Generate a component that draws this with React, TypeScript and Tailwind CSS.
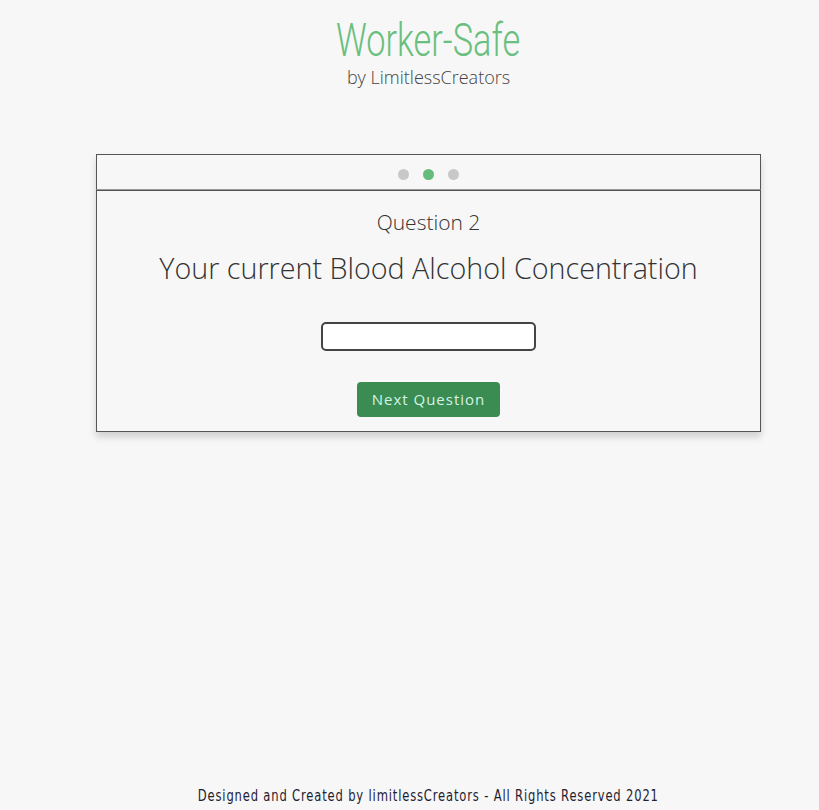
import React from "react";

export default function App() {
  return (
    <div className="min-h-[810px] bg-[#f7f7f7] flex flex-col items-center pl-[38px]">
      <header className="flex flex-col items-center pt-[14px]">
        <h1
          className="text-[#6abf7f] text-[47px] leading-[52px] scale-x-[0.73] whitespace-nowrap"
          style={{ fontFamily: 'Roboto, sans-serif', fontWeight: 300 }}
        >
          Worker-Safe
        </h1>
        <p className="text-[#444] text-[18px] leading-[22px] font-light" style={{ fontFamily: '"Open Sans", sans-serif' }}>
          by LimitlessCreators
        </p>
      </header>

      <main className="w-[665px] mt-[66px] shadow-[0_5px_7px_rgba(0,0,0,0.16)]">
        <div className="h-[36px] border border-[#555] border-b-[#999] flex items-center justify-center gap-[14px] pt-[4px]">
          <span className="w-[11px] h-[11px] rounded-full bg-[#c8c8c8]" />
          <span className="w-[11px] h-[11px] rounded-full bg-[#66bb7a]" />
          <span className="w-[11px] h-[11px] rounded-full bg-[#c8c8c8]" />
        </div>
        <div
          className="border border-[#555] flex flex-col items-center pt-[16px] pb-[14px] text-[#333]"
          style={{ fontFamily: '"Open Sans", sans-serif' }}
        >
          <div className="text-[21px] leading-[30px] font-light">Question 2</div>
          <div className="text-[28.7px] leading-[40px] font-light mt-[11px]">Your current Blood Alcohol Concentration</div>
          <input
            type="text"
            className="mt-[34px] w-[215px] h-[29px] bg-white border-2 border-[#444] rounded-[5px] outline-none"
          />
          <button className="mt-[31px] w-[143px] h-[35px] bg-[#3a8c52] text-[#d4f3e4] rounded-[4px] text-[15px] tracking-[1px]">
            Next Question
          </button>
        </div>
      </main>

      <footer className="mt-auto pb-[2px]">
        <p
          className="text-[#1e2130] text-[16.5px] leading-[24px] tracking-[1.2px] scale-x-[0.70] whitespace-nowrap"
          style={{ fontFamily: '"DejaVu Sans", sans-serif' }}
        >
          Designed and Created by limitlessCreators - All Rights Reserved 2021
        </p>
      </footer>
    </div>
  );
}
